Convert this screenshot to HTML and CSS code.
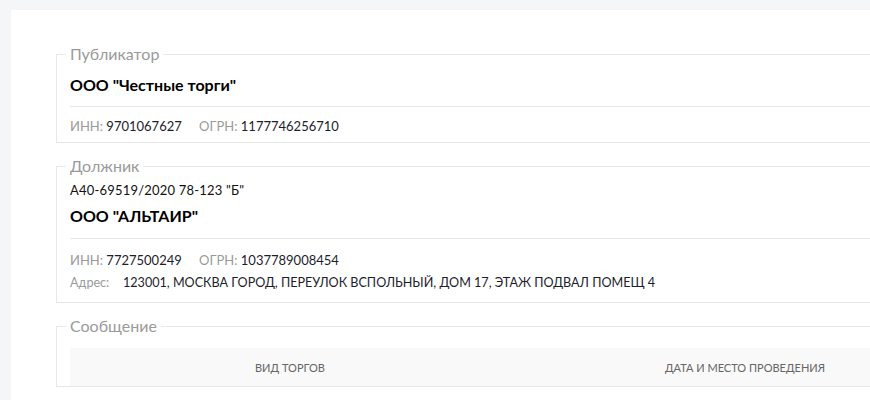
FILE: index.html
```html
<!DOCTYPE html>
<html lang="ru">

<head>
  <meta charset="UTF-8">
  <meta name="viewport" content="width=device-width, initial-scale=1.0">
  <title>Сообщение о торгах</title>
  <link rel="stylesheet" href="styles.css">
</head>

<body>
  <div class="page">
    <!-- Публикатор -->
    <fieldset class="box">
      <legend>Публикатор</legend>
      <div class="head">
        <div class="name">ООО "Честные торги"</div>
      </div>
      <div class="info">
        <div class="row">
          <span class="lbl">ИНН:</span> <span class="val">9701067627</span>
          <span class="lbl gap">ОГРН:</span> <span class="val">1177746256710</span>
        </div>
      </div>
    </fieldset>

    <!-- Должник -->
    <fieldset class="box">
      <legend>Должник</legend>
      <div class="head head-debtor">
        <div class="case">А40-69519/2020 78-123 "Б"</div>
        <div class="name">ООО "АЛЬТАИР"</div>
      </div>
      <div class="info info-debtor">
        <div class="row">
          <span class="lbl">ИНН:</span> <span class="val">7727500249</span>
          <span class="lbl gap">ОГРН:</span> <span class="val">1037789008454</span>
        </div>
        <div class="row addr">
          <span class="lbl">Адрес:</span><span class="val">123001, МОСКВА ГОРОД, ПЕРЕУЛОК ВСПОЛЬНЫЙ, ДОМ 17, ЭТАЖ ПОДВАЛ ПОМЕЩ 4</span>
        </div>
      </div>
    </fieldset>

    <!-- Сообщение -->
    <fieldset class="box">
      <legend>Сообщение</legend>
      <div class="thead">
        <div class="th">Вид торгов</div>
        <div class="th">Дата и место проведения</div>
        <div class="th"></div>
      </div>
    </fieldset>
  </div>
</body>

</html>
```

FILE: styles.css
```css
html {
  overflow: hidden;
}
body {
  margin: 0;
  background: #f5f6f8;
  font-family: "Lato", "Open Sans", sans-serif;
  color: #1d1d2b;
}
.page {
  width: 1100px;
  margin: 10px 0 0 11px;
  padding: 1px 0 40px 45px;
  background: #fff;
  min-height: 400px;
  box-sizing: border-box;
}
.box {
  margin: 0 0 13px 0;
  padding: 0 13px;
  border: 1px solid #e8e8e8;
}
.box:first-child {
  margin-top: 33px;
}
.box legend {
  margin-left: -4px;
  padding: 0 4px;
  font-size: 16px;
  line-height: 20px;
  color: #9a9a9a;
}
.head {
  padding: 11px 0;
  border-bottom: 1px solid #e8e8e8;
}
.name {
  font-size: 16px;
  font-weight: 700;
  line-height: 20px;
  color: #000;
}
.case {
  font-size: 13px;
  line-height: 16px;
  letter-spacing: 0.2px;
  margin-bottom: 8px;
  color: #111;
}
.head-debtor {
  padding: 6px 0 12px;
}
.info {
  padding: 10px 0 7px;
  font-size: 13px;
  line-height: 18px;
}
.info-debtor {
  padding: 12px 0 10px;
}
.row + .row {
  margin-top: 5px;
}
.addr {
  font-size: 12.6px;
}
.addr .lbl {
  display: inline-block;
  width: 53px;
}
.lbl {
  color: #9a9a9a;
}
.gap {
  margin-left: 14px;
}
.val {
  color: #1d1d2b;
}
/* шапка таблицы */
.thead {
  display: grid;
  grid-template-columns: 440px 470px 1fr;
  margin-top: 12px;
  height: 38px;
  background: #f9f9f9;
}
.th {
  display: flex;
  align-items: center;
  justify-content: center;
  font-size: 11px;
  text-transform: uppercase;
  color: #666;
}
```
